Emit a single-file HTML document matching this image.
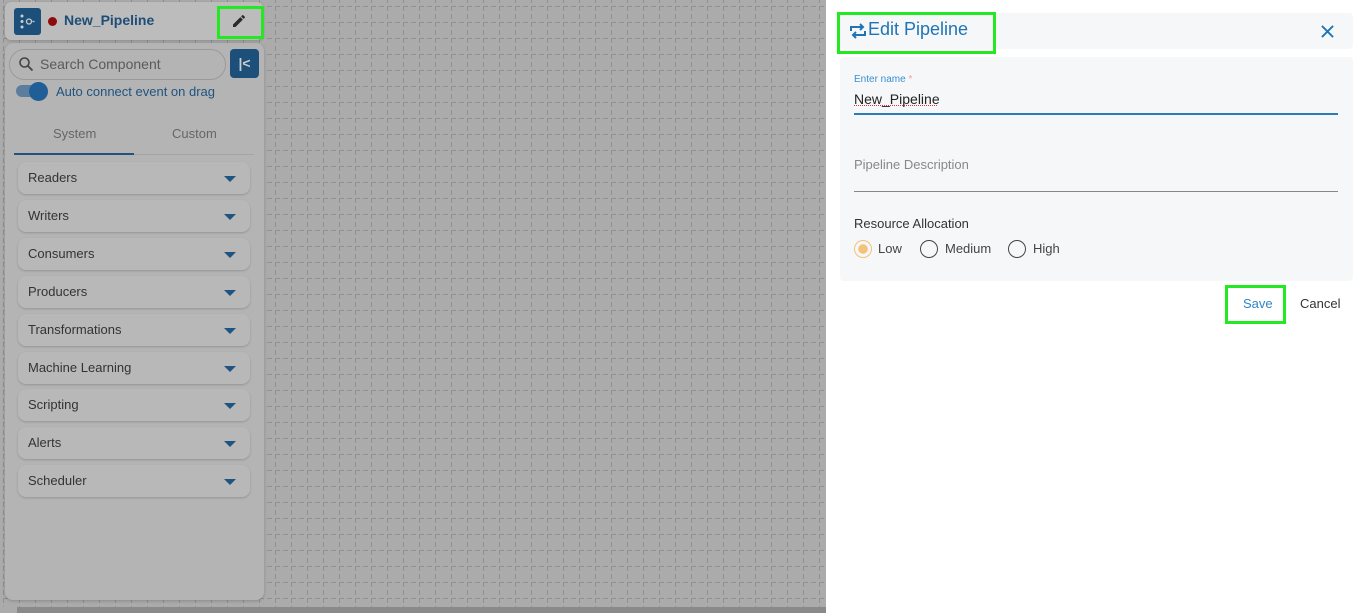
<!DOCTYPE html>
<html><head><style>
*{box-sizing:border-box;margin:0;padding:0}
body{width:1365px;height:613px;overflow:hidden;font-family:"Liberation Sans",sans-serif;position:relative;background:#ababab}
.bottom{position:absolute;left:17px;top:607px;width:809px;height:6px;background:#8a8a8a}
.hdr{position:absolute;left:5px;top:2px;width:258px;height:38px;background:#bcbcbc;border-radius:6px;box-shadow:0 1px 3px rgba(0,0,0,.2)}
.logo{position:absolute;left:9px;top:6px;width:27px;height:27px;background:#1c4f7a;border-radius:3px}
.dot{position:absolute;left:43px;top:15px;width:9px;height:9px;border-radius:50%;background:#8e0b0b}
.title{position:absolute;left:59px;top:10px;font-size:14px;font-weight:bold;color:#1e4d78}
.gbox{position:absolute;border:3px solid #23e823}
.panel{position:absolute;left:5px;top:43px;width:259px;height:557px;background:#b4b4b4;border-radius:8px;box-shadow:0 1px 3px rgba(0,0,0,.2)}
.search{position:absolute;left:9px;top:49px;width:217px;height:31px;border:1px solid #9a9a9a;border-radius:16px;font-size:14px;color:#5a5a5a;padding:6px 0 0 30px}
.kbtn{position:absolute;left:230px;top:49px;width:29px;height:29px;background:#1c4f7a;border-radius:4px;color:#ccc;font-weight:bold;font-size:14px;text-align:center;line-height:29px}
.tog{position:absolute;left:16px;top:85px;width:30px;height:12px;border-radius:6px;background:#5b7e9f}
.togk{position:absolute;left:29px;top:82px;width:19px;height:19px;border-radius:50%;background:#1f5e96}
.auto{position:absolute;left:56px;top:84px;font-size:13px;color:#1f5380}
.tab{position:absolute;top:126px;font-size:13px;color:#666}
.tabline{position:absolute;left:14px;top:154px;width:240px;height:1px;background:#a4a4a4}
.tabact{position:absolute;left:14px;top:153px;width:120px;height:2px;background:#1f5380}
.item{position:absolute;left:18px;width:232px;height:32px;background:#b8b8b8;border-radius:8px;box-shadow:0 1px 2px rgba(0,0,0,.18);font-size:13px;color:#333;padding:8px 0 0 10px}
.item:after{content:"";position:absolute;right:14px;top:14px;border-left:6px solid transparent;border-right:6px solid transparent;border-top:6px solid #1f5380}
.side{position:absolute;left:826px;top:0;width:539px;height:613px;background:#fff}
.shead{position:absolute;left:839px;top:13px;width:514px;height:36px;background:#f5f7f9;border-radius:4px}
.form{position:absolute;left:840px;top:57px;width:513px;height:224px;background:#f5f7f9;border-radius:4px}
.lbl{position:absolute;font-size:13px}
.radio{position:absolute;top:240px;width:18px;height:18px;border-radius:50%;border:1.5px solid #444}
</style></head><body>
<svg style="position:absolute;left:0;top:0" width="826" height="607"><defs><pattern id="g" x="3" y="6" width="16" height="16" patternUnits="userSpaceOnUse"><path d="M0.5 0V16M0 0.5H16" stroke="#919191" stroke-width="1" stroke-dasharray="5 3" fill="none"/></pattern></defs><rect width="826" height="607" fill="#ababab"/><rect width="826" height="607" fill="url(#g)"/></svg>
<div class="bottom"></div>
<div class="panel"></div>
<div class="hdr"><div class="logo"><svg width="27" height="27" viewBox="0 0 27 27"><circle cx="8" cy="8" r="1.5" fill="#ccc"/><circle cx="8" cy="13.5" r="1.5" fill="#ccc"/><circle cx="8" cy="19" r="1.5" fill="#ccc"/><circle cx="15" cy="13.5" r="2.5" fill="none" stroke="#ccc" stroke-width="1.3"/><path d="M18.5 13.5h2" stroke="#ccc" stroke-width="1.3"/></svg></div><div class="dot"></div><div class="title">New_Pipeline</div></div>
<svg style="position:absolute;left:231px;top:13px" width="16" height="16" viewBox="0 0 24 24"><path d="M3 17.25V21h3.75L17.8 9.94l-3.75-3.75L3 17.25zM20.7 7.04a1 1 0 000-1.41l-2.34-2.34a1 1 0 00-1.41 0l-1.83 1.83 3.75 3.75 1.83-1.83z" fill="#2a2a2a"/></svg>
<div class="gbox" style="left:217px;top:6px;width:47px;height:33px"></div>
<div class="search">Search Component</div>
<svg style="position:absolute;left:18px;top:56px" width="16" height="16" viewBox="0 0 16 16"><circle cx="6.5" cy="6.5" r="4.5" fill="none" stroke="#444" stroke-width="1.6"/><path d="M10 10l4.5 4.5" stroke="#444" stroke-width="1.8"/></svg>
<div class="kbtn">|&lt;</div>
<div class="tog"></div><div class="togk"></div>
<div class="auto">Auto connect event on drag</div>
<div class="tab" style="left:53px">System</div>
<div class="tab" style="left:172px">Custom</div>
<div class="tabline"></div><div class="tabact"></div>
<div class="item" style="top:162px">Readers</div>
<div class="item" style="top:200px">Writers</div>
<div class="item" style="top:238px">Consumers</div>
<div class="item" style="top:276px">Producers</div>
<div class="item" style="top:314px">Transformations</div>
<div class="item" style="top:352px">Machine Learning</div>
<div class="item" style="top:389px">Scripting</div>
<div class="item" style="top:427px">Alerts</div>
<div class="item" style="top:465px">Scheduler</div>

<div class="side"></div>
<div class="shead"></div>
<svg style="position:absolute;left:849px;top:22px" width="18" height="18" viewBox="0 0 18 18" fill="none" stroke="#1f74b5" stroke-width="2"><path d="M2 9V5h12M11 2l3 3-3 3M16 9v4H4M7 16l-3-3 3-3"/></svg>
<div class="lbl" style="left:868px;top:19px;font-size:18px;color:#1f74b5">Edit Pipeline</div>
<div class="gbox" style="left:837px;top:12px;width:159px;height:42px"></div>
<svg style="position:absolute;left:1321px;top:25px" width="13" height="13" viewBox="0 0 14 14"><path d="M1 1l12 12M13 1L1 13" stroke="#1f74b5" stroke-width="2"/></svg>
<div class="form"></div>
<div class="lbl" style="left:854px;top:74px;font-size:10px;color:#3a8fd0">Enter name <span style="color:#f0a0a0">*</span></div>
<div class="lbl" style="left:854px;top:91px;font-size:14px;color:#222">New_Pipeline</div>
<div style="position:absolute;left:854px;top:105px;width:83px;border-bottom:1px dotted #d33"></div>
<div style="position:absolute;left:854px;top:113px;width:484px;height:2px;background:#2f7ab8"></div>
<div class="lbl" style="left:854px;top:157px;color:#888">Pipeline Description</div>
<div style="position:absolute;left:854px;top:191px;width:484px;height:1px;background:#888"></div>
<div class="lbl" style="left:854px;top:216px;color:#333">Resource Allocation</div>
<div class="radio" style="left:854px;border-color:#f5c27a;background:radial-gradient(circle,#f5c27a 0 4.5px,transparent 5px)"></div>
<div class="lbl" style="left:878px;top:241px;color:#444">Low</div>
<div class="radio" style="left:920px"></div>
<div class="lbl" style="left:945px;top:241px;color:#444">Medium</div>
<div class="radio" style="left:1008px"></div>
<div class="lbl" style="left:1033px;top:241px;color:#444">High</div>
<div class="lbl" style="left:1243px;top:296px;color:#2f85c8">Save</div>
<div class="gbox" style="left:1225px;top:285px;width:61px;height:39px"></div>
<div class="lbl" style="left:1300px;top:296px;color:#333">Cancel</div>
</body></html>
